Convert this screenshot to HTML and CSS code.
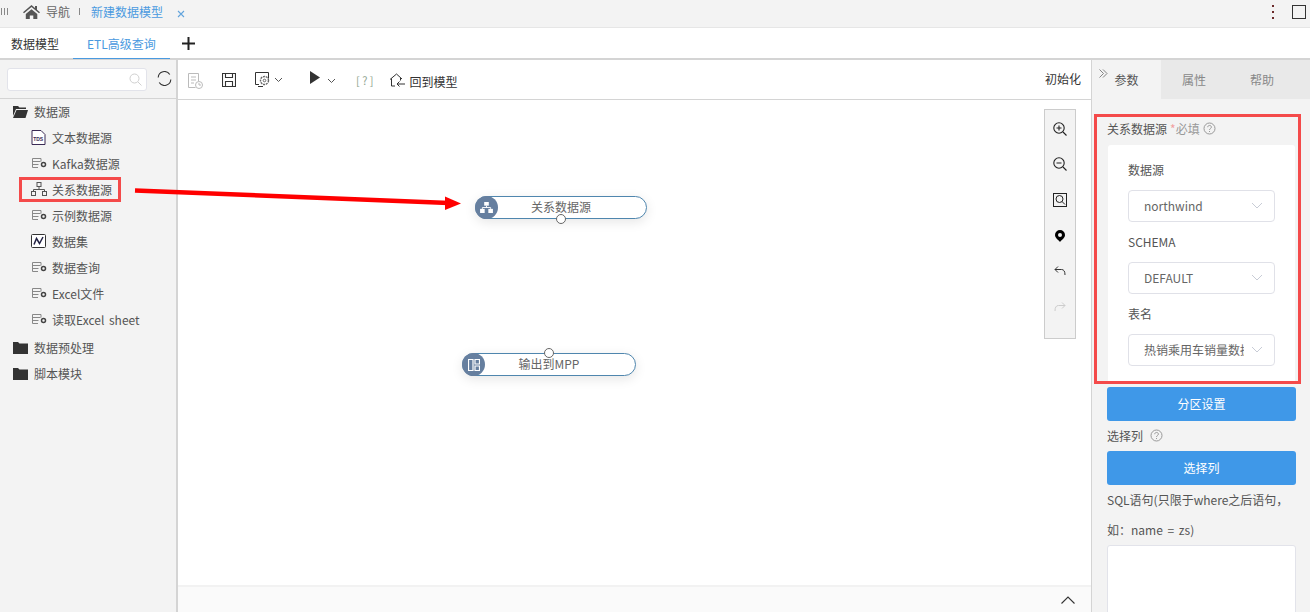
FILE: index.html
```html
<!DOCTYPE html>
<html lang="zh">
<head>
<meta charset="utf-8">
<title>ETL高级查询</title>
<link rel="stylesheet" href="styles.css">
</head>
<body>
<svg class="defs" width="0" height="0">
  <symbol id="db" viewBox="0 0 16 12">
    <path d="M1.5 1.5h8.500M1.5 1.5v9h5.500M10 1.5v3M1.5 4.5h8M1.5 7.500h6" fill="none" stroke="#888" stroke-width="1"/>
    <circle cx="12.500" cy="7.500" r="2" fill="none" stroke="#444" stroke-width="1.500"/>
  </symbol>
  <symbol id="folder" viewBox="0 0 15 13">
    <path d="M0 1h5l1.500 1.500H15V13H0z" fill="#333"/>
  </symbol>
  <symbol id="help" viewBox="0 0 13 13">
    <circle cx="6.500" cy="6.500" r="5.500" fill="none" stroke="#999" stroke-width="1"/>
    <path d="M4.700 5.200c0-2.300 3.700-2.300 3.700-.1 0 1.400-1.900 1.400-1.900 2.900M6.500 9v1" fill="none" stroke="#999" stroke-width="1"/>
  </symbol>
  <symbol id="chev" viewBox="0 0 12 7">
    <path d="M1 1l5 5 5-5" fill="none" stroke="#c8ccd6" stroke-width="1"/>
  </symbol>
  <symbol id="chev-dark" viewBox="0 0 9 6">
    <path d="M1 1l3.500 3.500L8 1" fill="none" stroke="#555" stroke-width="1"/>
  </symbol>
</svg>

<header class="topbar">
  <span class="grip"><i></i><i></i><i></i></span>
  <svg class="home" width="17" height="14" viewBox="0 0 17 14"><path d="M8.500 0L0 7.200l1 1.100L8.500 2l7.500 6.300 1-1.100-3-2.500V1h-2v2zM2.800 9v5h4v-3.500h3.500V14h4V9L8.500 4.200z" fill="#555"/></svg>
  <span class="crumb">导航</span>
  <span class="sep"></span>
  <span class="crumb-active">新建数据模型</span>
  <svg class="close" width="8" height="8" viewBox="0 0 8 8"><path d="M1 1l6 6M7 1L1 7" stroke="#62a4dc" stroke-width="1.100"/></svg>
  <span class="spacer"></span>
  <span class="dots"><i></i><i></i><i></i></span>
  <span class="square"></span>
</header>

<nav class="tabs">
  <span class="tab">数据模型</span>
  <span class="tab tab-on">ETL高级查询</span>
  <svg class="plus" width="13" height="13" viewBox="0 0 13 13"><path d="M6.500 0v13M0 6.500h13" stroke="#222" stroke-width="2"/></svg>
</nav>

<main class="workspace">
  <aside class="side">
    <div class="search-row">
      <div class="search">
        <svg width="13" height="13" viewBox="0 0 13 13"><circle cx="5.500" cy="5.500" r="4.500" fill="none" stroke="#d0d0d0"/><path d="M9 9l3.500 3.500" stroke="#d0d0d0"/></svg>
      </div>
      <svg class="refresh" width="15" height="15" viewBox="0 0 15 15"><path d="M1.200 6.500A6.300 6.300 0 0 1 12.800 3.500M13.800 8.500A6.300 6.300 0 0 1 2.200 11.500" fill="none" stroke="#333" stroke-width="1.100"/></svg>
    </div>
    <ul class="tree">
      <li class="group">
        <svg width="15" height="13" viewBox="0 0 15 13"><path d="M0 1h5l1.500 1.500H13V4H3L0 11z M3.500 5H15l-2.500 8H0z" fill="#333"/></svg>
        数据源
      </li>
      <li class="item">
        <svg class="wide" width="15" height="15" viewBox="0 0 15 15"><path d="M1 .5h9l4 4v10H1z" fill="#fff" stroke="#3a2a55"/><text x="2.200" y="10.500" class="tds">TDS</text></svg>
        文本数据源
      </li>
      <li class="item"><svg width="16" height="12"><use href="#db"/></svg>Kafka数据源</li>
      <li class="item">
        <svg width="16" height="14" viewBox="0 0 16 14"><g fill="none" stroke="#555"><rect x="6" y=".5" width="4" height="4"/><rect x=".5" y="9.500" width="4" height="4"/><rect x="11.500" y="9.500" width="4" height="4"/><path d="M8 4.500v3M2.500 9.500v-2h11v2"/></g></svg>
        关系数据源
      </li>
      <li class="item"><svg width="16" height="12"><use href="#db"/></svg>示例数据源</li>
      <li class="item">
        <svg class="wide" width="15" height="14" viewBox="0 0 15 14"><rect x=".5" y=".5" width="14" height="13" rx="1" fill="#fff" stroke="#333"/><path d="M3 10.500l2.500-6 3 5 3.500-6.500" fill="none" stroke="#224" stroke-width="1.500"/></svg>
        数据集
      </li>
      <li class="item"><svg width="16" height="12"><use href="#db"/></svg>数据查询</li>
      <li class="item"><svg width="16" height="12"><use href="#db"/></svg>Excel文件</li>
      <li class="item"><svg width="16" height="12"><use href="#db"/></svg>读取Excel sheet</li>
      <li class="group group-next"><svg width="15" height="13"><use href="#folder"/></svg>数据预处理</li>
      <li class="group"><svg width="15" height="13"><use href="#folder"/></svg>脚本模块</li>
    </ul>
  </aside>

  <section class="center">
    <div class="toolbar">
      <svg class="t1" width="15" height="16" viewBox="0 0 15 16"><path d="M10.500 8V.5H.5v14h7M3 4h5M3 7h5M3 10h3" fill="none" stroke="#bbb"/><circle cx="11" cy="12" r="3.500" fill="none" stroke="#bbb"/><path d="M11 10v2h2" fill="none" stroke="#bbb"/></svg>
      <svg class="t2" width="14" height="14" viewBox="0 0 14 14"><path d="M.5.500h13v13H.5zM3.500.500v4h7v-4M3.500 13.500v-5h7v5" fill="none" stroke="#333" stroke-width="1.100"/></svg>
      <svg class="t3" width="15" height="15" viewBox="0 0 15 15"><path d="M4 12.500H.5V.500h13v6M3 14.500h5" fill="none" stroke="#333"/><circle cx="9.500" cy="8.500" r="4" fill="none" stroke="#666" stroke-dasharray="2 .8" stroke-width="1.400"/><circle cx="9.500" cy="8.500" r="1.300" fill="none" stroke="#666"/></svg>
      <svg class="c1" width="9" height="6"><use href="#chev-dark"/></svg>
      <svg class="t4" width="10" height="13" viewBox="0 0 10 13"><path d="M0 0l10 6.500L0 13z" fill="#333"/></svg>
      <svg class="c2" width="9" height="6"><use href="#chev-dark"/></svg>
      <span class="bracket">[ ? ]</span>
      <svg class="t5" width="16" height="14" viewBox="0 0 16 14"><path d="M1 6.500L7.500 1 13 6M2.500 5.500V13H6M11.500 5v2.500M16 11H8M10.500 8.500L8 11l2.500 2.500" fill="none" stroke="#333"/></svg>
      <span class="back">回到模型</span>
      <span class="spacer"></span>
      <span class="init">初始化</span>
    </div>
    <div class="canvas">
      <div class="node node-a">
        <span class="node-icon">
          <svg width="13" height="11" viewBox="0 0 14 12"><g fill="#fff"><rect x="4.500" y="0" width="5" height="4"/><rect x="0" y="7.500" width="5" height="4.500"/><rect x="9" y="7.500" width="5" height="4.500"/></g><path d="M7 4v2M2.500 7.500V6h9v1.500" fill="none" stroke="#fff"/></svg>
        </span>
        <span class="node-text">关系数据源</span>
        <span class="port port-bottom"></span>
      </div>
      <div class="node node-b">
        <span class="node-icon">
          <svg width="12" height="12" viewBox="0 0 12 12"><path d="M.5.500h4.500v11H.5zM7 .500h4.500v4.500H7zM7 7h4.500v4.500H7z" fill="none" stroke="#fff" stroke-width="1.200"/></svg>
        </span>
        <span class="node-text">输出到MPP</span>
        <span class="port port-top"></span>
      </div>
      <div class="float-tools">
        <svg width="14" height="14" viewBox="0 0 14 14"><circle cx="6" cy="6" r="5.200" fill="none" stroke="#222" stroke-width="1.100"/><path d="M10 10l3.500 3.500M3.500 6h5M6 3.500v5" stroke="#222" stroke-width="1.100"/></svg>
        <svg width="14" height="14" viewBox="0 0 14 14"><circle cx="6" cy="6" r="5.200" fill="none" stroke="#222" stroke-width="1.100"/><path d="M10 10l3.500 3.500M3.500 6h5" stroke="#222" stroke-width="1.100"/></svg>
        <svg width="14" height="14" viewBox="0 0 14 14"><rect x=".5" y=".5" width="13" height="13" fill="none" stroke="#222"/><circle cx="6.500" cy="6" r="3.500" fill="none" stroke="#222"/><path d="M9 8.500l3 3" stroke="#222"/></svg>
        <svg width="10" height="12" viewBox="0 0 10 12"><path fill-rule="evenodd" d="M5 0a5 5 0 0 1 5 5c0 3-3 4.500-5 7-2-2.500-5-4-5-7a5 5 0 0 1 5-5zm0 3a2 2 0 1 0 0 4 2 2 0 0 0 0-4z" fill="#000"/></svg>
        <svg width="12" height="10" viewBox="0 0 12 10"><path d="M4 .5L1 3.500 4 6.500M1 3.500h6.500c2.500 0 3.500 2 3.500 5.500" fill="none" stroke="#333"/></svg>
        <svg width="12" height="10" viewBox="0 0 12 10"><path d="M8 .5l3 3-3 3M11 3.500H4.500C2 3.500 1 5.500 1 9" fill="none" stroke="#ccc"/></svg>
      </div>
    </div>
    <div class="bottom">
      <svg width="14" height="8" viewBox="0 0 14 8"><path d="M.5 7.500L7 1l6.500 6.500" fill="none" stroke="#333" stroke-width="1.100"/></svg>
    </div>
  </section>

  <aside class="panel">
    <div class="panel-tabs">
      <span class="ptab ptab-on">
        <svg class="collapse" width="9" height="9" viewBox="0 0 9 9"><path d="M.5.500l4 4-4 4M4 .500l4 4-4 4" fill="none" stroke="#777" stroke-width=".9"/></svg>
        参数
      </span>
      <span class="ptab">属性</span>
      <span class="ptab ptab-last">帮助</span>
    </div>
    <div class="panel-body">
      <div class="title-row">关系数据源 <span class="req"><b>*</b>必填</span> <svg width="13" height="13"><use href="#help"/></svg></div>
      <div class="card">
        <div class="field-label">数据源</div>
        <div class="select"><span class="select-text">northwind</span><svg width="12" height="7"><use href="#chev"/></svg></div>
        <div class="field-label">SCHEMA</div>
        <div class="select"><span class="select-text">DEFAULT</span><svg width="12" height="7"><use href="#chev"/></svg></div>
        <div class="field-label">表名</div>
        <div class="select"><span class="select-text">热销乘用车销量数据</span><svg width="12" height="7"><use href="#chev"/></svg></div>
      </div>
      <div class="btn">分区设置</div>
      <div class="line-help">选择列 <svg width="13" height="13"><use href="#help"/></svg></div>
      <div class="btn">选择列</div>
      <div class="line">SQL语句(只限于where之后语句，</div>
      <div class="line">如：name = zs)</div>
      <div class="area"></div>
    </div>
  </aside>
</main>

<div class="mark mark-left"></div>
<div class="mark mark-right"></div>
<svg class="arrow" width="340" height="30" viewBox="0 0 340 30"><path d="M1 2.500L315 15" stroke="#f00" stroke-width="4.500"/><path d="M327 15.500L311 8.500V22z" fill="#f00"/></svg>
</body>
</html>
```

FILE: styles.css
```css
* { box-sizing: border-box; }
html, body { margin: 0; height: 612px; overflow: hidden; }
body {
  position: relative;
  display: flex;
  flex-direction: column;
  font-family: "Noto Sans CJK SC", "Liberation Sans", sans-serif;
  font-size: 12px;
  word-spacing: 2px;
  color: #555;
  background: #fff;
}
.defs { position: absolute; }
.spacer { flex: 1; }

.topbar {
  height: 28px;
  flex: none;
  display: flex;
  align-items: center;
  padding-bottom: 4px;
  background: #f3f3f3;
  border-bottom: 1px solid #e6e6e6;
}
.grip { display: flex; gap: 2px; margin-left: 1px; }
.grip i { width: 1px; height: 7px; background: #888; }
.home { margin-left: 15px; }
.crumb { margin-left: 6px; color: #666; }
.sep { width: 1px; height: 7px; background: #888; margin: 0 11px 0 9px; }
.crumb-active { color: #4a9ae0; }
.close { margin-left: 14px; margin-top: 4px; }
.dots { display: flex; flex-direction: column; gap: 4px; margin-right: 18px; }
.dots i { width: 2px; height: 2px; background: #6b2a2a; }
.square { width: 14px; height: 14px; border: 1px solid #333; margin-right: 4px; }

.tabs {
  height: 32px;
  flex: none;
  display: flex;
  align-items: stretch;
  background: #fff;
  border-bottom: 2px solid #d4d4d4;
}
.tab { padding: 0 11px; display: flex; align-items: center; color: #333; height: 31px; }
.tab-on { margin-left: 3px; padding: 0 14px; color: #4a9ae0; border-bottom: 1px solid #4a9ae0; }
.plus { align-self: center; margin-left: 12px; }

.workspace { flex: 1; min-height: 0; display: flex; }

.side { width: 178px; flex: none; background: #f3f3f3; border-right: 2px solid #d4d4d4; }
.search-row {
  height: 39px;
  display: flex;
  align-items: center;
  padding-left: 7px;
  border-bottom: 1px solid #d4d4d4;
}
.search {
  width: 140px;
  height: 23px;
  background: #fff;
  border: 1px solid #e2e3ea;
  border-radius: 3px;
  display: flex;
  align-items: center;
  justify-content: flex-end;
  padding-right: 4px;
}
.refresh { margin-left: 10px; margin-bottom: 1px; }
.tree { list-style: none; margin: -1px 0 0; padding: 0; }
.group, .item { height: 26px; display: flex; align-items: center; color: #555; }
.group { padding-left: 13px; gap: 6px; }
.item { padding-left: 31px; gap: 5px; }
.wide { margin-right: 1px; }
.group-next { margin-top: 2px; }
.tds { font: bold 5px "Liberation Sans", sans-serif; fill: #3a2a55; }

.center { flex: 1; min-width: 0; display: flex; flex-direction: column; }
.toolbar {
  height: 40px;
  flex: none;
  display: flex;
  align-items: center;
  padding-left: 10px;
  padding-right: 10px;
  border-bottom: 1px solid #d4d4d4;
  color: #333;
}
.t1 { margin-top: 2px; }
.t2 { margin-left: 19px; }
.t3 { margin-left: 19px; }
.c1 { margin-left: 4px; }
.t4 { margin-left: 27px; margin-top: -4px; }
.c2 { margin-left: 7px; margin-top: 2px; }
.bracket { margin-left: 20px; color: #8fa58f; font-size: 11px; word-spacing: 0; }
.t5 { margin-left: 15px; margin-top: 1px; }
.back { margin-left: 5px; margin-top: 3px; color: #333; }
.init { margin-bottom: 2px; }
.canvas { flex: 1; position: relative; overflow: hidden; background: #fff; }
.bottom {
  height: 27px;
  flex: none;
  display: flex;
  align-items: center;
  justify-content: flex-end;
  padding-right: 16px;
  background: #fafafa;
  border-top: 2px solid #f2f2f2;
}

.node {
  position: absolute;
  height: 23px;
  padding-bottom: 2px;
  border: 1px solid #4f86ae;
  border-radius: 12px;
  background: #fff;
  box-shadow: 0 3px 12px rgba(0, 0, 0, .1);
  display: flex;
  align-items: center;
  justify-content: center;
  color: #666;
}
.node-a { left: 297px; top: 96px; width: 172px; }
.node-b { left: 284px; top: 253px; width: 174px; }
.node-icon {
  position: absolute;
  left: -1px;
  top: -1px;
  width: 23px;
  height: 23px;
  border-radius: 50%;
  background: #667f9f;
  display: flex;
  align-items: center;
  justify-content: center;
}
.port {
  position: absolute;
  width: 10px;
  height: 10px;
  left: 81px;
  border: 1px solid #666;
  border-radius: 50%;
  background: #fff;
}
.node-a .port { left: 80px; }
.port-bottom { bottom: -6px; }
.port-top { top: -6px; }

.float-tools {
  position: absolute;
  right: 15px;
  top: 9px;
  width: 32px;
  height: 230px;
  padding-top: 1px;
  background: #f3f3f3;
  border: 1px solid #ccc;
  display: grid;
  grid-auto-rows: 35.6px;
  place-items: center;
}

.panel { width: 219px; flex: none; background: #f3f3f3; border-left: 1px solid #d4d4d4; display: flex; flex-direction: column; min-height: 0; overflow: hidden; }
.panel-tabs { height: 39px; flex: none; display: flex; background: #e9e9e9; }
.ptab { width: 66px; display: flex; align-items: center; justify-content: center; color: #888; padding-bottom: 1px; position: relative; }
.ptab-last { width: 70px; }
.ptab-on { width: 69px; background: #f3f3f3; color: #555; }
.collapse { position: absolute; left: 7px; top: 9px; }
.panel-body { padding: 20px 14px 0 15px; flex: 1; min-height: 0; }
.title-row { height: 20px; padding-bottom: 2px; display: flex; align-items: center; gap: 3px; color: #555; }
.req { color: #999; }
.req b { color: #f2a0a0; font-weight: normal; }
.card {
  margin: 6px 1px 4px 1px;
  height: 238px;
  padding: 15px 20px 0;
  background: #fff;
  border-radius: 3px;
}
.field-label { height: 20px; line-height: 20px; color: #555; }
.select {
  height: 32px;
  margin: 10px 0;
  padding: 0 11px 2px 15px;
  border: 1px solid #e0e1e8;
  border-radius: 4px;
  display: flex;
  align-items: center;
  justify-content: space-between;
  gap: 7px;
  color: #666;
  background: #fff;
}
.select-text { white-space: nowrap; overflow: hidden; flex: 1; }
.btn {
  height: 34px;
  padding-bottom: 2px;
  background: #3f98e8;
  border-radius: 3px;
  color: #fff;
  display: flex;
  align-items: center;
  justify-content: center;
}
.line-help { height: 30px; padding-bottom: 2px; display: flex; align-items: center; gap: 7px; }
.line { height: 30px; line-height: 30px; color: #555; white-space: nowrap; }
.area { height: 80px; background: #fff; border: 1px solid #e2e3ea; border-radius: 3px; }

.mark { position: absolute; border: 3px solid #f44a4a; pointer-events: none; }
.mark-left { left: 19px; top: 177px; width: 102px; height: 25px; }
.mark-right { left: 1094px; top: 114px; width: 207px; height: 270px; }
.arrow { position: absolute; left: 134px; top: 188px; }
```
